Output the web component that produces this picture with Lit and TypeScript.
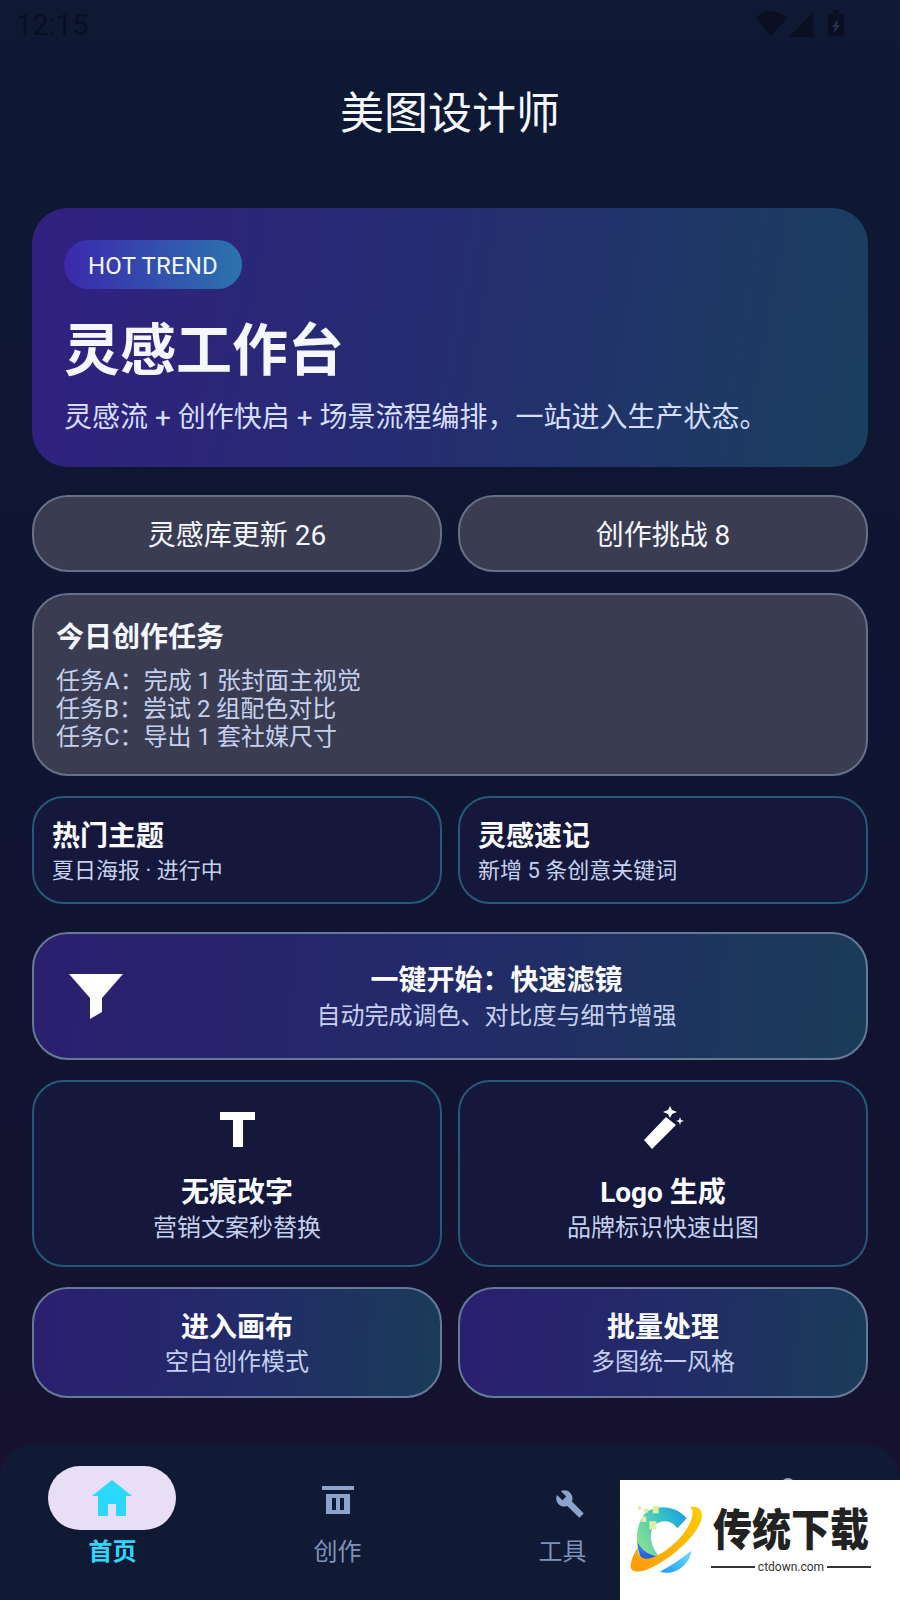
import { LitElement, html, css } from "lit";
import { customElement } from "lit/decorators.js";

@customElement("app-root")
export class AppRoot extends LitElement {
  static styles = css`
    :host {
      display: block;
      width: 900px;
      height: 1600px;
      position: relative;
      overflow: hidden;
      font-family: Roboto, "Noto Sans CJK SC", sans-serif;
      color: #f4f7ff;
      background: linear-gradient(180deg, #0f1933 0%, #0f1532 45%, #17112f 100%);
    }
    .page { display: flex; flex-direction: column; height: 1600px; }
    .status {
      height: 48px;
      box-sizing: border-box;
      padding: 7px 56px 0 16px;
      display: flex;
      justify-content: space-between;
      align-items: flex-start;
      color: #0a0f22;
      font-size: 29px;
      line-height: 36px;
    }
    .status svg { display: block; margin-top: 3px; }
    .title {
      margin: 0;
      height: 160px;
      display: flex;
      align-items: center;
      justify-content: center;
      padding-bottom: 36px;
      box-sizing: border-box;
      font-size: 44px;
      font-weight: 400;
      color: #f6f8ff;
    }
    main { padding: 0 32px; display: flex; flex-direction: column; }
    .hero {
      height: 259px;
      box-sizing: border-box;
      padding: 32px 32px 0;
      border-radius: 36px;
      background: linear-gradient(100deg, #312080 0%, #262c72 45%, #1a3f5e 100%);
    }
    .badge {
      display: inline-block;
      width: 178px;
      height: 49px;
      line-height: 52px;
      text-align: center;
      font-size: 24px;
      letter-spacing: 0.2px;
      border-radius: 25px;
      background: linear-gradient(90deg, #3c28ad, #2b74ad);
    }
    .hero h1 {
      margin: 24px 0 0 0;
      font-size: 56px;
      line-height: 76px;
      font-weight: 700;
    }
    .hero p { margin: 9px 0 0; font-size: 28px; line-height: 40px; color: #d5deff; }
    .two { display: grid; grid-template-columns: 410px 410px; gap: 16px; }
    .pill {
      height: 77px;
      box-sizing: border-box;
      border: 2px solid #667087;
      border-radius: 36px;
      background: #3a3d52;
      display: flex;
      align-items: center;
      justify-content: center;
      padding-bottom: 2px;
      font-size: 28px;
    }
    .task {
      height: 183px;
      box-sizing: border-box;
      border: 2px solid #667087;
      border-radius: 36px;
      background: #3a3d52;
      padding: 23px 22px 0;
    }
    .task h2 { margin: 0 0 9px; font-size: 28px; line-height: 40px; font-weight: 700; }
    .task div { font-size: 24px; line-height: 28px; color: #c5d0ee; }
    .outline {
      box-sizing: border-box;
      border: 2px solid #245a78;
      border-radius: 32px;
      background: #15183a;
    }
    .small { height: 108px; padding: 19px 18px 0; }
    .small .s { font-size: 22px; margin-top: -2px; }
    .t { font-size: 28px; line-height: 40px; font-weight: 700; color: #fbfcff; }
    .s { font-size: 24px; line-height: 32px; color: #c5d0ee; }
    .grad {
      box-sizing: border-box;
      border: 2px solid #667a98;
      border-radius: 36px;
      background: linear-gradient(95deg, #2b1f70 0%, #24296a 45%, #1a3c58 100%);
    }
    .filter {
      height: 128px;
      display: flex;
      align-items: center;
      padding-left: 35px;
    }
    .filter svg { flex: none; display: block; }
    .filter .txt { flex: 1; text-align: center; margin-left: 4px; padding-top: 1px; }
    .filter .s { margin-top: -1px; }
    .big {
      height: 187px;
      display: flex;
      flex-direction: column;
      align-items: center;
      text-align: center;
      padding-top: 24px;
    }
    .big svg { display: block; height: 48px; margin-bottom: 19px; }
    .big .s { margin-top: -1px; }
    .cta {
      height: 111px;
      text-align: center;
      padding-top: 19px;
    }
    .cta .s { margin-top: -2px; }
    .m20 { margin-top: 20px; }
    .m21 { margin-top: 21px; }
    .m28 { margin-top: 28px; }
    nav {
      position: absolute;
      left: 0;
      right: 0;
      bottom: 0;
      height: 156px;
      box-sizing: border-box;
      padding-top: 22px;
      background: #111a35;
      border-radius: 36px 36px 0 0;
      display: grid;
      grid-template-columns: repeat(4, 225px);
    }
    .item {
      display: flex;
      flex-direction: column;
      align-items: center;
      color: #7f92ba;
      font-size: 24px;
      line-height: 32px;
    }
    .ic {
      width: 128px;
      height: 64px;
      display: flex;
      align-items: center;
      justify-content: center;
      border-radius: 32px;
      margin-bottom: 6px;
    }
    .ic svg { display: block; }
    .ic .trash { margin-top: 4px; }
    .ic .wrench { margin: 11px 0 0 14px; }
    .item.on { color: #2dd8ff; font-weight: 700; }
    .item.on .ic { background: #e8dff7; margin-right: 2px; }
    .mark {
      position: absolute;
      left: 620px;
      top: 1480px;
      width: 280px;
      height: 120px;
      background: #fff;
      display: flex;
    }
    .mark svg { flex: none; display: block; width: 88px; height: 120px; }
    .brand { margin-left: 3px; width: 160px; display: flex; flex-direction: column; align-items: center; }
    .brand b {
      display: block;
      font-size: 39px;
      line-height: 46px;
      margin-top: 28px;
      font-weight: 900;
      color: #222;
      white-space: nowrap;
      transform: scaleY(1.15);
    }
    .url {
      display: flex;
      align-items: center;
      gap: 3px;
      margin-top: 5px;
      width: 100%;
      font-size: 12px;
      line-height: 16px;
      color: #333;
    }
    .url i { flex: 1; height: 2px; background: #333; }
  `;

  render() {
    return html`
      <div class="page">
        <div class="status">
          <span>12:15</span>
          <svg width="88" height="27" viewBox="756 10 88 27" fill="#0a0f22">
            <path d="M756 18 C765 9 778 9 787 18 L771 36 Z" />
            <path d="M813 12 V37 H789 Z" />
            <path d="M833 14 V10 H839 V14 H843 A1 1 0 0 1 844 15 V35 A1 1 0 0 1 843 36 H829 A1 1 0 0 1 828 35 V15 A1 1 0 0 1 829 14 Z" />
            <path d="M838 19 L832 27 H835 L834 33 L840 25 H837 Z" fill="#23304f" />
          </svg>
        </div>
        <h1 class="title">美图设计师</h1>
        <main>
          <section class="hero">
            <span class="badge">HOT TREND</span>
            <h1>灵感工作台</h1>
            <p>灵感流 + 创作快启 + 场景流程编排，一站进入生产状态。</p>
          </section>
          <div class="two m28">
            <div class="pill">灵感库更新 26</div>
            <div class="pill">创作挑战 8</div>
          </div>
          <section class="task m21">
            <h2>今日创作任务</h2>
            <div>任务A：完成 1 张封面主视觉</div>
            <div>任务B：尝试 2 组配色对比</div>
            <div>任务C：导出 1 套社媒尺寸</div>
          </section>
          <div class="two m20">
            <div class="outline small"><div class="t">热门主题</div><div class="s">夏日海报 · 进行中</div></div>
            <div class="outline small"><div class="t">灵感速记</div><div class="s">新增 5 条创意关键词</div></div>
          </div>
          <section class="grad filter m28">
            <svg width="54" height="45" viewBox="69 975 54 45" fill="#fff"><path d="M69 975 H123 L102 999 V1013 L90 1020 V999 Z" /></svg>
            <div class="txt"><div class="t">一键开始：快速滤镜</div><div class="s">自动完成调色、对比度与细节增强</div></div>
          </section>
          <div class="two m20">
            <div class="outline big">
              <svg width="36" height="48" viewBox="218 1106 36 48" fill="#fff"><path d="M219 1112 H254 V1120 H242 V1147 H232 V1120 H219 Z" /></svg>
              <div class="t">无痕改字</div><div class="s">营销文案秒替换</div>
            </div>
            <div class="outline big">
              <svg width="48" height="48" viewBox="639 1106 48 48" fill="#fff">
                <path d="M644 1140 L666 1117 L676 1125 L652 1149 Z" />
                <path d="M670 1106 L672 1110 L677 1112 L672 1114 L670 1118 L668 1114 L663 1112 L668 1110 Z" />
                <path d="M680 1117 L681 1120 L684 1121 L681 1122 L680 1125 L679 1122 L676 1121 L679 1120 Z" />
              </svg>
              <div class="t">Logo 生成</div><div class="s">品牌标识快速出图</div>
            </div>
          </div>
          <div class="two m20">
            <div class="grad cta"><div class="t">进入画布</div><div class="s">空白创作模式</div></div>
            <div class="grad cta"><div class="t">批量处理</div><div class="s">多图统一风格</div></div>
          </div>
        </main>
      </div>
      <nav>
        <div class="item on">
          <div class="ic">
            <svg width="40" height="36" viewBox="92 1480 40 36" fill="#2dd8ff"><path d="M112 1480 L132 1496 H126 V1516 H116 V1504 H108 V1516 H98 V1496 H92 Z" /></svg>
          </div>
          首页
        </div>
        <div class="item">
          <div class="ic">
            <svg class="trash" width="32" height="28" viewBox="321 1486 32 28" fill="#8ea3cb"><path fill-rule="evenodd" d="M321 1486 H353 V1490 H321 Z M325 1494 H349 V1514 H325 Z M331 1498 V1510 H335 V1498 Z M339 1498 V1510 H343 V1498 Z" /></svg>
          </div>
          创作
        </div>
        <div class="item">
          <div class="ic">
            <svg class="wrench" width="30" height="30" viewBox="0 0 24 24" fill="#8ea3cb"><path d="M23 19.500 L13.600 9.900 C14.500 7.600 14 4.900 12.100 3 C10.100 1 7.100 0.600 4.700 1.700 L9 6 L6 9 L1.600 4.700 C0.400 7.100 0.900 10.100 2.900 12.100 C4.800 14 7.500 14.500 9.800 13.600 L19.500 23 Z" /></svg>
          </div>
          工具
        </div>
        <div class="item">
          <div class="ic">
            <svg width="32" height="40" viewBox="0 0 32 40" fill="#8ea3cb"><circle cx="16" cy="7" r="7" /></svg>
          </div>
        </div>
      </nav>
      <div class="mark">
        <svg viewBox="60 60 264 360">
          <defs>
            <linearGradient id="c" x1="0" y1="0.7" x2="1" y2="0.1">
              <stop offset="0" stop-color="#8fe38c" />
              <stop offset="0.55" stop-color="#3cc4c8" />
              <stop offset="1" stop-color="#159fdc" />
            </linearGradient>
            <linearGradient id="o" x1="0" y1="1" x2="1" y2="0">
              <stop offset="0" stop-color="#ff9a0a" />
              <stop offset="1" stop-color="#ffcc00" />
            </linearGradient>
            <linearGradient id="b" x1="0" y1="0" x2="0" y2="1">
              <stop offset="0" stop-color="#3f8cf5" />
              <stop offset="1" stop-color="#1b50dc" />
            </linearGradient>
            <linearGradient id="l" x1="0" y1="1" x2="1" y2="0">
              <stop offset="0" stop-color="#1f9cf5" />
              <stop offset="1" stop-color="#6fdcff" />
            </linearGradient>
          </defs>
          <path d="M140 155 C175 135 225 135 260 175 L232 205 C215 180 185 178 165 195 C145 215 148 255 178 290 L130 305 C100 260 105 190 140 155 Z" fill="url(#c)" />
          <path d="M113 245 C120 262 135 282 178 291 L130 305 C120 290 113 270 113 245 Z" fill="url(#b)" />
          <path d="M270 142 C298 135 315 155 300 190 C280 235 215 295 150 325 C115 342 88 335 92 315 C94 295 105 278 113 262 C112 285 125 300 150 295 C200 280 260 225 275 175 C280 158 278 148 270 142 Z" fill="url(#o)" />
          <path d="M180 335 C215 315 245 295 275 272 C268 305 245 330 215 337 C200 340 190 338 180 335 Z" fill="url(#l)" />
          <g fill="#dff0a0">
            <rect x="158" y="138" width="18" height="22" />
            <rect x="132" y="146" width="12" height="12" />
            <rect x="114" y="138" width="9" height="11" />
            <rect x="124" y="170" width="15" height="16" />
            <rect x="148" y="184" width="21" height="24" />
          </g>
        </svg>
        <div class="brand">
          <b>传统下载</b>
          <div class="url"><i></i><span>ctdown.com</span><i></i></div>
        </div>
      </div>
    `;
  }
}
